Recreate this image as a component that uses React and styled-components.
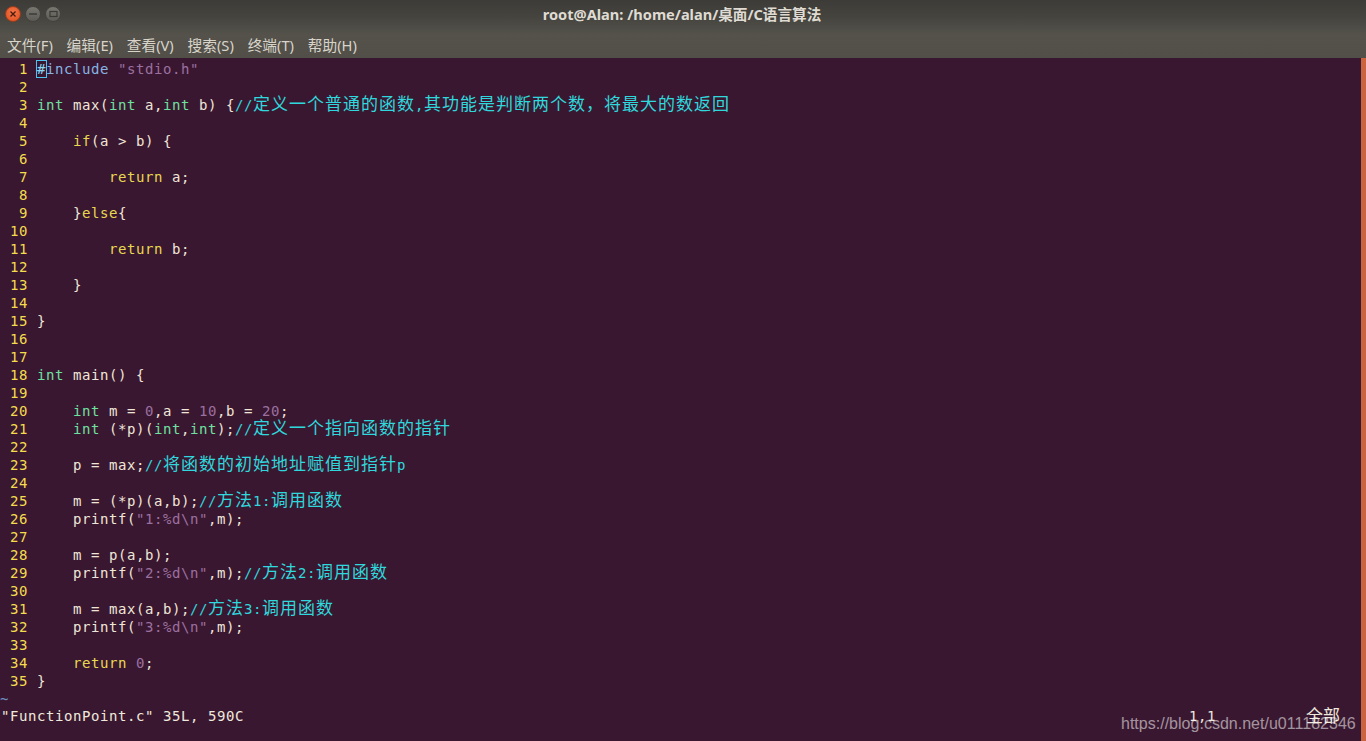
import React from "react";
import styled, { createGlobalStyle } from "styled-components";

const Global = createGlobalStyle`
  html, body { margin: 0; padding: 0; height: 100%; overflow: hidden; background: #380c2a; }
  #root { height: 100%; }
`;

const Window = styled.div`
  width: 1366px;
  height: 741px;
  display: flex;
  flex-direction: column;
  position: relative;
  overflow: hidden;
  background: #3a1730;
`;

const Chrome = styled.header`
  height: 58px;
  flex: none;
  display: flex;
  flex-direction: column;
  background: linear-gradient(#3c3b37 0%, #45443f 30%, #54524b 60%, #514f48 100%);
`;

const TitleBar = styled.div`
  height: 28px;
  display: flex;
  align-items: center;
  padding-left: 5px;
  position: relative;
`;

const Controls = styled.div`
  display: flex;
  gap: 4px;
`;

const Control = styled.div`
  width: 16px;
  height: 16px;
  border-radius: 50%;
  display: flex;
  align-items: center;
  justify-content: center;
  box-sizing: border-box;
  border: 1px solid ${(p) => (p.$close ? "#9a3d1c" : "#43423d")};
  background: ${(p) =>
    p.$close
      ? "radial-gradient(circle at 50% 40%, #f4764a, #dd4c1c)"
      : "linear-gradient(#77766f, #5c5b55)"};
`;

const Title = styled.div`
  position: absolute;
  left: 0;
  right: 0;
  top: 4px;
  text-align: center;
  padding-right: 2px;
  font: 700 14.6px/20px "Noto Sans", "Noto Sans CJK SC", sans-serif;
  color: #dfdbd2;
`;

const MenuBar = styled.nav`
  height: 30px;
  display: flex;
  align-items: center;
  padding: 4px 0 0 7px;
  box-sizing: border-box;
  gap: 13.8px;
`;

const MenuItem = styled.span`
  font: 400 14.7px/20px "Noto Sans", "Noto Sans CJK SC", sans-serif;
  color: #d8d4ca;
`;

const Terminal = styled.main`
  flex: 1;
  display: flex;
  min-height: 0;
`;

const Screen = styled.div`
  flex: 1;
  padding-top: 2px;
  min-width: 0;
`;

const Scrollbar = styled.div`
  width: 5px;
  flex: none;
  background: #c9643f;
`;

const Row = styled.div`
  height: 18px;
  display: flex;
  white-space: pre;
  font: 400 14px/18px "DejaVu Sans Mono", monospace;
  letter-spacing: 0.57px;
  color: #efe9dd;
`;

const LineNo = styled.span`
  width: 28px;
  flex: none;
  text-align: right;
  color: #f3dc4e;
  margin-right: 9px;
`;

const colours = {
  text: "#efe6d8",
  type: "#6ee0a0",
  kw: "#e8d750",
  pre: "#86b4e2",
  str: "#9b70a0",
  com: "#2fd8dc",
};

const Tok = styled.span`
  color: ${(p) => colours[p.$k]};
`;

const Cjk = styled.span`
  font: 400 17px/0 "Noto Sans CJK SC", sans-serif;
  letter-spacing: 1px;
`;

const Cursor = styled.span`
  position: relative;
  color: #86d4f0;

  &::after {
    content: "";
    position: absolute;
    left: -1px;
    top: -1px;
    width: 11px;
    height: 18px;
    box-sizing: border-box;
    border: 1px solid #4fc3f0;
  }
`;

const Tilde = styled.div`
  height: 17px;
  font: 400 14px/18px "DejaVu Sans Mono", monospace;
  color: #6f8fc0;
`;

const StatusLine = styled.div`
  height: 18px;
  display: flex;
  white-space: pre;
  font: 400 14px/18px "DejaVu Sans Mono", monospace;
  letter-spacing: 0.57px;
  color: #efe9dd;
  padding-left: 1px;
`;

const StatusMsg = styled.span`
  width: 1188px;
  flex: none;
`;

const StatusPos = styled.span`
  width: 117px;
  flex: none;
`;

const StatusPct = styled.span`
  font: 400 17px/16px "Noto Sans CJK SC", sans-serif;
  letter-spacing: 0;
  color: #efe9dd;
`;

const Watermark = styled.div`
  position: absolute;
  left: 1121px;
  top: 713px;
  font: 400 16.05px/20px "Liberation Sans", sans-serif;
  color: rgba(255, 255, 255, 0.55);
`;

const CJK_RE = /([\u3000-\u303f\u4e00-\u9fff\uff00-\uffef]+)/;

function Comment({ children }) {
  return (
    <Tok $k="com">
      {children.split(CJK_RE).map((part, i) =>
        i % 2 ? <Cjk key={i}>{part}</Cjk> : part
      )}
    </Tok>
  );
}

const T = (s) => ["text", s];
const Y = (s) => ["type", s];
const K = (s) => ["kw", s];
const S = (s) => ["str", s];
const C = (s) => ["com", s];

const code = [
  [["cursor", "#"], ["pre", "include "], S('"stdio.h"')],
  [],
  [Y("int"), T(" max("), Y("int"), T(" a,"), Y("int"), T(" b) {"), C("//定义一个普通的函数,其功能是判断两个数，将最大的数返回")],
  [],
  [K("    if"), T("(a > b) {")],
  [],
  [K("        return"), T(" a;")],
  [],
  [T("    }"), K("else"), T("{")],
  [],
  [K("        return"), T(" b;")],
  [],
  [T("    }")],
  [],
  [T("}")],
  [],
  [],
  [Y("int"), T(" main() {")],
  [],
  [Y("    int"), T(" m = "), S("0"), T(",a = "), S("10"), T(",b = "), S("20"), T(";")],
  [Y("    int"), T(" (*p)("), Y("int"), T(","), Y("int"), T(");"), C("//定义一个指向函数的指针")],
  [],
  [T("    p = max;"), C("//将函数的初始地址赋值到指针p")],
  [],
  [T("    m = (*p)(a,b);"), C("//方法1:调用函数")],
  [T("    printf("), S('"1:%d\\n"'), T(",m);")],
  [],
  [T("    m = p(a,b);")],
  [T("    printf("), S('"2:%d\\n"'), T(",m);"), C("//方法2:调用函数")],
  [],
  [T("    m = max(a,b);"), C("//方法3:调用函数")],
  [T("    printf("), S('"3:%d\\n"'), T(",m);")],
  [],
  [K("    return"), T(" "), S("0"), T(";")],
  [T("}")],
];

const menus = ["文件(F)", "编辑(E)", "查看(V)", "搜索(S)", "终端(T)", "帮助(H)"];

export default function App() {
  return (
    <Window>
      <Global />
      <Chrome>
        <TitleBar>
          <Controls>
            <Control $close>
              <svg width="8" height="8" viewBox="0 0 8 8">
                <path d="M1.5 1.5l5 5M6.5 1.5l-5 5" stroke="#4a1c0c" strokeWidth="1.4" />
              </svg>
            </Control>
            <Control>
              <svg width="8" height="8" viewBox="0 0 8 8">
                <path d="M0 4h8" stroke="#3a3935" strokeWidth="1.4" />
              </svg>
            </Control>
            <Control>
              <svg width="9" height="8" viewBox="0 0 9 8">
                <rect x="1" y="1.5" width="7" height="5" fill="none" stroke="#3a3935" strokeWidth="1.2" />
              </svg>
            </Control>
          </Controls>
          <Title>root@Alan: /home/alan/桌面/C语言算法</Title>
        </TitleBar>
        <MenuBar>
          {menus.map((m) => (
            <MenuItem key={m}>{m}</MenuItem>
          ))}
        </MenuBar>
      </Chrome>
      <Terminal>
        <Screen>
          {code.map((toks, i) => (
            <Row key={i}>
              <LineNo>{i + 1}</LineNo>
              <span>
                {toks.map(([k, s], j) =>
                  k === "cursor" ? (
                    <Cursor key={j}>{s}</Cursor>
                  ) : k === "com" ? (
                    <Comment key={j}>{s}</Comment>
                  ) : (
                    <Tok key={j} $k={k}>{s}</Tok>
                  )
                )}
              </span>
            </Row>
          ))}
          <Tilde>~</Tilde>
          <StatusLine>
            <StatusMsg>"FunctionPoint.c" 35L, 590C</StatusMsg>
            <StatusPos>1,1</StatusPos>
            <StatusPct>全部</StatusPct>
          </StatusLine>
        </Screen>
        <Scrollbar />
      </Terminal>
      <Watermark>https://blog.csdn.net/u011182346</Watermark>
    </Window>
  );
}
